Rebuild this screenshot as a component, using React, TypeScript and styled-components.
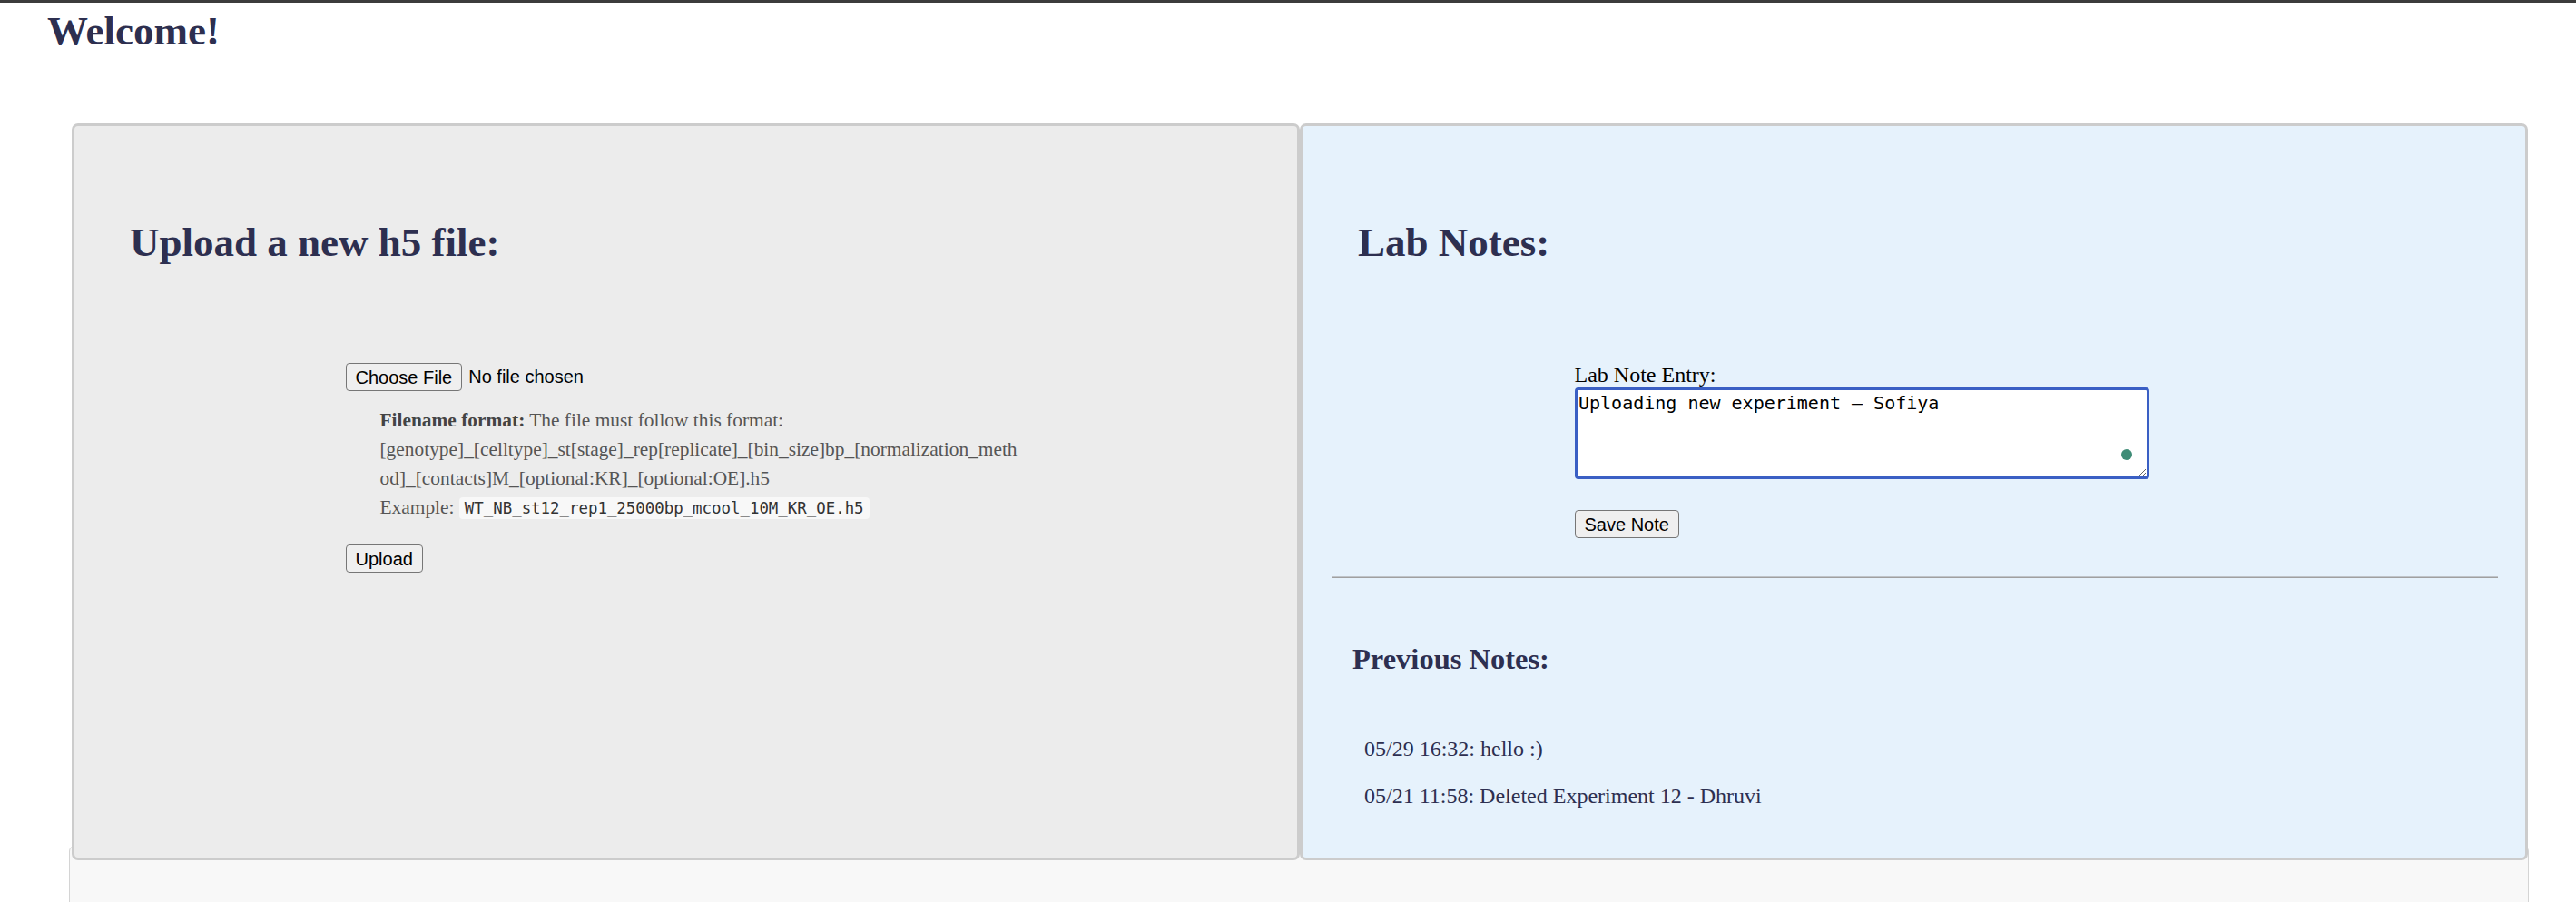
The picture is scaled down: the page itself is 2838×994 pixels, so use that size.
import styled, { createGlobalStyle } from 'styled-components';

const GlobalStyle = createGlobalStyle`
  html, body {
    margin: 0;
    padding: 0;
    background: #ffffff;
    overflow: hidden;
  }
  body {
    font-family: "Liberation Serif", "Times New Roman", serif;
    color: #000000;
  }
`;

const TopBar = styled.div`
  height: 3px;
  background: #3c3c3c;
`;

const PageTitle = styled.h1`
  margin: 4px 0 0;
  padding-left: 52px;
  font-size: 45px;
  line-height: 54px;
  font-weight: 700;
  color: #2d2f50;
`;

const PanelRow = styled.div`
  position: relative;
  z-index: 1;
  display: flex;
  height: 812px;
  margin: 75px 53px -16px 79px;
`;

const Panel = styled.section<{ $tone: 'grey' | 'blue' }>`
  flex: 1;
  box-sizing: border-box;
  padding-top: 101px;
  background: ${({ $tone }) => ($tone === 'blue' ? '#e6f2fc' : '#ececec')};
  border: 3px solid #cccccc;
  border-radius: 7px;
`;

const PanelTitle = styled.h2`
  margin: 0;
  padding-left: 61px;
  font-size: 45px;
  line-height: 54px;
  font-weight: 700;
  color: #2d2f50;
`;

const CenteredForm = styled.form<{ $width: number }>`
  width: ${({ $width }) => $width}px;
  margin: 106px auto 0;
`;

const FileRow = styled.div`
  display: flex;
  align-items: center;
  gap: 7px;
`;

const Button = styled.button`
  display: block;
  box-sizing: border-box;
  height: 31px;
  padding: 0 10px;
  font-family: "Liberation Sans", Arial, sans-serif;
  font-size: 20px;
  line-height: 24px;
  color: #000000;
  background: #efefef;
  border: 1.5px solid #767676;
  border-radius: 4px;
`;

const FileStatus = styled.span`
  font-family: "Liberation Sans", Arial, sans-serif;
  font-size: 20px;
  color: #000000;
`;

const FormatHelp = styled.div`
  margin-top: 16px;
  padding-left: 38px;
  font-size: 21.4px;
  line-height: 32px;
  color: #555555;

  strong {
    color: #444444;
  }
`;

const FormatLine = styled.span`
  display: block;
  white-space: nowrap;
`;

const Code = styled.code`
  padding: 2px 6px;
  font-family: "DejaVu Sans Mono", "Liberation Mono", monospace;
  font-size: 17.4px;
  color: #333333;
  background: #f8f8f8;
  border-radius: 4px;
`;

const UploadButton = styled(Button)`
  margin-top: 24px;
`;

const FieldLabel = styled.label`
  display: block;
  font-size: 24px;
  line-height: 27px;
  color: #000000;
`;

const TextareaWrap = styled.div`
  position: relative;
  width: 633px;
  height: 101px;
`;

const NoteInput = styled.textarea`
  display: block;
  box-sizing: border-box;
  width: 100%;
  height: 100%;
  padding: 1.5px 1.5px;
  font-family: "DejaVu Sans Mono", "Liberation Mono", monospace;
  font-size: 20px;
  color: #000000;
  background: #ffffff;
  border: 3px solid #3a5fc4;
  border-radius: 4px;
  outline: none;
`;

const AssistDot = styled.span`
  position: absolute;
  right: 19px;
  bottom: 21px;
  width: 12px;
  height: 12px;
  border-radius: 50%;
  background: #3f8c77;
`;

const SaveButton = styled(Button)`
  margin-top: 34px;
`;

const Divider = styled.hr`
  height: 0;
  margin: 42px 30px 0 32px;
  border: none;
  border-top: 1.5px solid #bfc4c9;
  border-bottom: 1.5px solid #a0a0a0;
`;

const NotesTitle = styled.h3`
  margin: 69px 0 0;
  padding-left: 55px;
  font-size: 32.5px;
  line-height: 40px;
  font-weight: 700;
  color: #2d2f50;
`;

const NotesList = styled.ul`
  list-style: none;
  margin: 65px 0 0;
  padding-left: 68px;
`;

const NoteItem = styled.li`
  font-size: 24px;
  line-height: 28px;
  color: #2d2f50;

  & + & {
    margin-top: 24px;
  }
`;

const LowerSection = styled.div`
  height: 70px;
  margin: 0 52px 0 76px;
  background: #f8f8f8;
  border: 1px solid #d4d4d4;
  border-radius: 6px;
`;

const notes = [
  '05/29 16:32: hello :)',
  '05/21 11:58: Deleted Experiment 12 - Dhruvi',
];

export default function App() {
  return (
    <>
      <GlobalStyle />
      <TopBar />
      <PageTitle>Welcome!</PageTitle>

      <PanelRow>
        <Panel $tone="grey">
          <PanelTitle>Upload a new h5 file:</PanelTitle>
          <CenteredForm $width={750} onSubmit={(e) => e.preventDefault()}>
            <FileRow>
              <Button type="button">Choose File</Button>
              <FileStatus>No file chosen</FileStatus>
            </FileRow>
            <FormatHelp>
              <FormatLine>
                <strong>Filename format:</strong> The file must follow this format:
              </FormatLine>
              <FormatLine>
                [genotype]_[celltype]_st[stage]_rep[replicate]_[bin_size]bp_[normalization_meth
              </FormatLine>
              <FormatLine>od]_[contacts]M_[optional:KR]_[optional:OE].h5</FormatLine>
              <FormatLine>
                Example: <Code>WT_NB_st12_rep1_25000bp_mcool_10M_KR_OE.h5</Code>
              </FormatLine>
            </FormatHelp>
            <UploadButton type="submit">Upload</UploadButton>
          </CenteredForm>
        </Panel>

        <Panel $tone="blue">
          <PanelTitle>Lab Notes:</PanelTitle>
          <CenteredForm $width={748} onSubmit={(e) => e.preventDefault()}>
            <FieldLabel htmlFor="lab-note">Lab Note Entry:</FieldLabel>
            <TextareaWrap>
              <NoteInput id="lab-note" defaultValue="Uploading new experiment – Sofiya" />
              <AssistDot />
            </TextareaWrap>
            <SaveButton type="submit">Save Note</SaveButton>
          </CenteredForm>
          <Divider />
          <NotesTitle>Previous Notes:</NotesTitle>
          <NotesList>
            {notes.map((n) => (
              <NoteItem key={n}>{n}</NoteItem>
            ))}
          </NotesList>
        </Panel>
      </PanelRow>

      <LowerSection />
    </>
  );
}
